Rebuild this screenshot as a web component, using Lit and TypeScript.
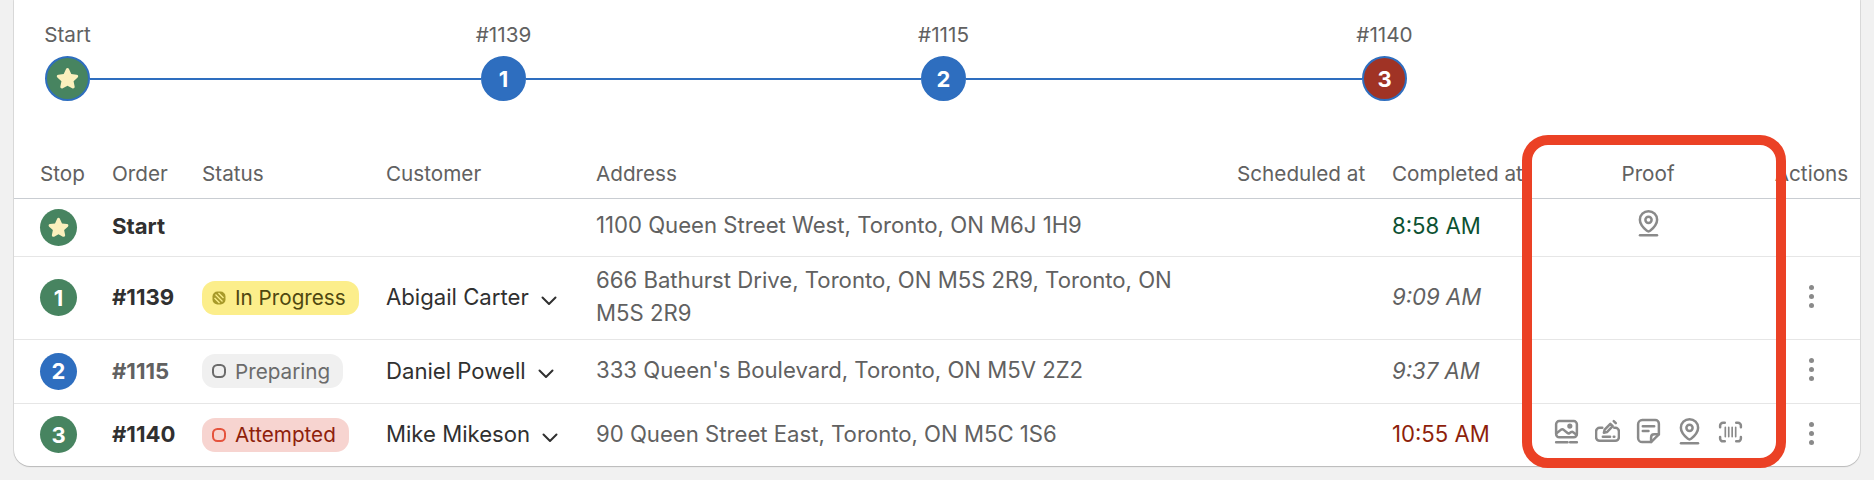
import { LitElement, html, css, svg, nothing, type TemplateResult } from "lit";
import { customElement } from "lit/decorators.js";

type Tone = "progress" | "preparing" | "attempted";

interface Row {
  stop: string;
  stopColor: "green" | "blue";
  order: string;
  muted?: boolean;
  status?: { label: string; tone: Tone };
  customer?: string;
  address: string;
  time: string;
  timeClass: string;
  proof: TemplateResult[];
  actions: boolean;
}

const star = (size: number) => html`<svg width=${size} height=${size} viewBox="0 0 20 20">
  <path
    d="M10 2.2c.5 0 .9.3 1.1.8l1.7 3.7 4 .5c1.1.1 1.5 1.4.7 2.1l-3 2.7.8 4c.2 1-.9 1.8-1.8 1.3L10 15.3l-3.5 2c-.9.5-2-.3-1.8-1.3l.8-4-3-2.7c-.8-.7-.4-2 .7-2.1l4-.5L8.9 3c.2-.5.6-.8 1.1-.8z"
    fill="#fbf0bd"
  />
</svg>`;

const icon = (body: unknown) => html`<svg class="proof-icon" width="25" height="27" viewBox="0 0 24 26">${body}</svg>`;

const pin = () =>
  icon(svg`<path d="M12 1.200c-4.600 0-8.300 3.600-8.300 8.100 0 4.600 3.600 8 6.600 10.600.9.800 2.500.800 3.400 0 3-2.600 6.600-6 6.600-10.600 0-4.500-3.700-8.100-8.300-8.100z"/>
    <circle cx="12" cy="9.500" r="3"/>
    <path d="M3.800 24.200h16.400"/>`);

const photo = () =>
  icon(svg`<rect x="2" y="3" width="20" height="15.500" rx="3"/>
    <circle cx="15.200" cy="7.800" r="1.300"/>
    <path d="M2.400 14.600l4.400-3.400c.7-.5 1.500-.5 2.200 0l4 3.200c.6.5 1.300.5 2 .1l1.400-.9c.7-.4 1.400-.4 2 .1l3.200 2.400"/>
    <path d="M2 23.400h11M15.500 23.400H22"/>`);

const signature = () =>
  icon(svg`<path d="M7 9.500H4.500c-1.900 0-3.500 1.500-3.500 3.400v5.700c0 1.900 1.600 3.400 3.500 3.400h15c1.900 0 3.500-1.500 3.500-3.400v-5.700c0-1.900-1.600-3.400-3.500-3.400h-1"/>
    <path d="M8.500 14.200l.8-3 5.400-5.600 2.300 2.300-5.500 5.600z"/>
    <path d="M18 3l2 2M7.500 18h7M18 18h.6"/>`);

const note = () =>
  icon(svg`<path d="M14.500 23.200H6c-2.200 0-4-1.800-4-4V6c0-2.200 1.800-4 4-4h12.500c2 0 3.500 1.500 3.500 3.500v10.200z"/>
    <path d="M14.500 23.200v-4.500c0-1.700 1.300-3 3-3H22"/>
    <path d="M6.500 8h11M6.500 12.500h5.500"/>`);

const barcode = () =>
  icon(svg`<path d="M6.500 4.500H4.800C3.300 4.500 2 5.800 2 7.300v1.500M17.500 4.500h1.700C20.700 4.500 22 5.800 22 7.300v1.500M6.500 22.500H4.800C3.300 22.500 2 21.200 2 19.700v-1.500M17.500 22.500h1.700c1.500 0 2.800-1.300 2.800-2.800v-1.500"/>
    <path class="bars" d="M7 9v9M10.300 9v9M13.600 9v9M17 9v9"/>`);

const ROWS: Row[] = [
  {
    stop: "star",
    stopColor: "green",
    order: "Start",
    address: "1100 Queen Street West, Toronto, ON M6J 1H9",
    time: "8:58 AM",
    timeClass: "time-ok",
    proof: [pin()],
    actions: false,
  },
  {
    stop: "1",
    stopColor: "green",
    order: "#1139",
    status: { label: "In Progress", tone: "progress" },
    customer: "Abigail Carter",
    address: "666 Bathurst Drive, Toronto, ON M5S 2R9, Toronto, ON M5S 2R9",
    time: "9:09 AM",
    timeClass: "time-eta",
    proof: [],
    actions: true,
  },
  {
    stop: "2",
    stopColor: "blue",
    order: "#1115",
    muted: true,
    status: { label: "Preparing", tone: "preparing" },
    customer: "Daniel Powell",
    address: "333 Queen's Boulevard, Toronto, ON M5V 2Z2",
    time: "9:37 AM",
    timeClass: "time-eta",
    proof: [],
    actions: true,
  },
  {
    stop: "3",
    stopColor: "green",
    order: "#1140",
    status: { label: "Attempted", tone: "attempted" },
    customer: "Mike Mikeson",
    address: "90 Queen Street East, Toronto, ON M5C 1S6",
    time: "10:55 AM",
    timeClass: "time-late",
    proof: [photo(), signature(), note(), pin(), barcode()],
    actions: true,
  },
];

@customElement("app-root")
export class AppRoot extends LitElement {
  private renderStatusIcon(tone: Tone) {
    if (tone === "progress") {
      return html`<svg width="14" height="16" viewBox="0 0 14 16">
        <rect x="0.5" y="1.500" width="13" height="13" rx="5" fill="#a89a2a" />
        <path d="M3.500 4.500l7 7M6.500 3l5 5M2.500 8l5 5" stroke="#fcee8b" stroke-width="1.300" />
      </svg>`;
    }
    const color = tone === "preparing" ? "#6b6b6b" : "#e5533d";
    return html`<svg width="14" height="16" viewBox="0 0 14 16">
      <rect x="1" y="2" width="12" height="12" rx="4.500" fill="none" stroke=${color} stroke-width="2" />
    </svg>`;
  }

  private renderRow(row: Row) {
    return html`<tr>
      <td class="stop-cell">
        <span class="stop-dot ${row.stopColor}">${row.stop === "star" ? star(25) : row.stop}</span>
      </td>
      <td class="order text ${row.muted ? "muted" : ""}">${row.order}</td>
      <td>
        ${row.status
          ? html`<span class="pill ${row.status.tone}">${this.renderStatusIcon(row.status.tone)}${row.status.label}</span>`
          : nothing}
      </td>
      <td class="text">
        ${row.customer
          ? html`<span class="customer">
              ${row.customer}
              <svg width="18" height="12" viewBox="0 0 18 12">
                <path d="M2.500 2.500l6.500 6.500 6.500-6.500" fill="none" stroke="#303030" stroke-width="2" stroke-linecap="round" stroke-linejoin="round" />
              </svg>
            </span>`
          : nothing}
      </td>
      <td class="address text">${row.address}</td>
      <td></td>
      <td class="text ${row.timeClass}">${row.time}</td>
      <td class="proof"><div class="proof-list">${row.proof}</div></td>
      <td class="actions">
        ${row.actions ? html`<span class="dots"><i></i><i></i><i></i></span>` : nothing}
      </td>
    </tr>`;
  }

  render() {
    return html`
      <div class="card">
        <div class="route">
          <div class="route-stop">
            <span class="route-label">Start</span>
            <span class="route-dot green">${star(27)}</span>
          </div>
          <span class="route-line" style="width: 391px"></span>
          <div class="route-stop">
            <span class="route-label">#1139</span>
            <span class="route-dot blue plain">1</span>
          </div>
          <span class="route-line" style="width: 395px"></span>
          <div class="route-stop">
            <span class="route-label">#1115</span>
            <span class="route-dot blue plain">2</span>
          </div>
          <span class="route-line" style="width: 396px"></span>
          <div class="route-stop">
            <span class="route-label">#1140</span>
            <span class="route-dot red">3</span>
          </div>
        </div>
        <table>
          <colgroup>
            <col style="width: 98px" />
            <col style="width: 90px" />
            <col style="width: 184px" />
            <col style="width: 210px" />
            <col style="width: 641px" />
            <col style="width: 155px" />
            <col style="width: 135px" />
            <col style="width: 242px" />
            <col style="width: 91px" />
          </colgroup>
          <thead>
            <tr>
              <th class="stop-cell">Stop</th>
              <th>Order</th>
              <th>Status</th>
              <th>Customer</th>
              <th>Address</th>
              <th>Scheduled at</th>
              <th>Completed at</th>
              <th class="proof">Proof</th>
              <th class="actions">Actions</th>
            </tr>
          </thead>
          <tbody>
            ${ROWS.map((row) => this.renderRow(row))}
          </tbody>
        </table>
      </div>
      <div class="highlight"></div>
    `;
  }

  static styles = css`
    :host {
      display: block;
      position: relative;
      height: 480px;
      background: #f1f1f1;
      font-family: Inter, "Liberation Sans", sans-serif;
      font-size: 22.15px;
      color: #303030;
      overflow: hidden;
    }

    .card {
      margin-left: 14px;
      width: 1846px;
      height: 466px;
      box-sizing: border-box;
      background: #fff;
      border-radius: 0 0 16px 16px;
      box-shadow: 0 1px 1px #b8b8b8, 1px 0 0 #dcdcdc, -1px 0 0 #dcdcdc;
      overflow: hidden;
    }

    .route {
      display: flex;
      align-items: flex-end;
      height: 101px;
      padding-left: 31px;
      box-sizing: border-box;
    }

    .route-stop {
      display: flex;
      flex-direction: column;
      align-items: center;
      width: 45px;
    }

    .route-label {
      color: #616161;
      font-size: 20.7px;
      white-space: nowrap;
      line-height: 22px;
      margin-bottom: 10px;
    }

    .route-dot {
      width: 45px;
      height: 45px;
      box-sizing: border-box;
      border-radius: 50%;
      border: 2px solid #2e6ebf;
      display: flex;
      align-items: center;
      justify-content: center;
      color: #fff;
      font-weight: 700;
      font-size: 22px;
    }

    .route-line {
      flex: none;
      height: 2px;
      margin-bottom: 21px;
      background: #2e6ebf;
    }

    .green {
      background: #478460;
    }

    .blue {
      background: #2e6ebf;
    }

    .red {
      background: #a03325;
    }

    table {
      width: 1846px;
      table-layout: fixed;
      border-collapse: collapse;
      margin-top: 49px;
    }

    th {
      height: 48px;
      padding: 0 0 1px;
      box-sizing: border-box;
      text-align: left;
      font-size: 20.7px;
      font-weight: 400;
      color: #616161;
      white-space: nowrap;
      border-bottom: 1px solid #c9cdd2;
    }

    td {
      padding: 0;
      vertical-align: middle;
      color: #616161;
      border-bottom: 1px solid #e6e6e6;
    }

    td.text {
      padding-bottom: 1px;
    }

    tbody tr:first-child td.text {
      padding-bottom: 3px;
    }

    tbody tr:nth-child(1) {
      height: 58px;
    }

    tbody tr:nth-child(2) {
      height: 83px;
    }

    tbody tr:nth-child(3) {
      height: 64px;
    }

    tbody tr:nth-child(4) {
      height: 63px;
    }

    tbody tr:last-child td {
      border-bottom: none;
    }

    .stop-cell {
      padding-left: 26px;
    }

    .stop-dot {
      width: 37px;
      height: 37px;
      border-radius: 50%;
      display: flex;
      align-items: center;
      justify-content: center;
      color: #fff;
      font-weight: 700;
      font-size: 22px;
    }

    .order {
      font-weight: 650;
      color: #303030;
    }

    .order.muted {
      color: #616161;
    }

    .pill {
      display: inline-flex;
      align-items: center;
      gap: 9px;
      height: 34px;
      padding: 0 13px 0 10px;
      box-sizing: border-box;
      border-radius: 13px;
      font-size: 20.7px;
      white-space: nowrap;
    }

    .pill.progress {
      background: #fcee8b;
      color: #4f4710;
    }

    .pill.preparing {
      background: #f0f0f0;
      color: #6b6b6b;
    }

    .pill.attempted {
      background: #f7d4d0;
      color: #8e1f0b;
    }

    .customer {
      display: inline-flex;
      align-items: center;
      gap: 11px;
      color: #303030;
      white-space: nowrap;
    }

    .customer svg {
      margin-top: 7px;
    }

    .address {
      padding-right: 45px;
      line-height: 33px;
    }

    .time-ok {
      color: #0c5132;
    }

    .time-eta {
      font-style: italic;
    }

    .time-late {
      color: #8e1f0b;
    }

    th.proof {
      text-align: center;
    }

    .proof-list {
      display: flex;
      justify-content: center;
      gap: 16px;
      margin-bottom: 6px;
    }

    tbody tr:first-child .proof-list {
      margin-bottom: 8px;
    }

    .proof-icon {
      fill: none;
      stroke: #8a8a8a;
      stroke-width: 2.4;
      stroke-linecap: round;
      stroke-linejoin: round;
    }

    .proof-icon .bars {
      stroke-width: 1.6;
    }

    .actions {
      padding: 0 7px 0 0;
      text-align: center;
    }

    th.actions {
      padding-right: 6px;
    }

    .dots {
      display: inline-flex;
      flex-direction: column;
      gap: 4px;
      vertical-align: middle;
      margin-bottom: 4px;
    }

    .dots i {
      width: 5px;
      height: 5px;
      border-radius: 50%;
      background: #8a8a8a;
    }

    .highlight {
      position: absolute;
      left: 1522px;
      top: 135px;
      width: 264px;
      height: 333px;
      box-sizing: border-box;
      border: 10px solid #eb4125;
      border-radius: 26px;
      pointer-events: none;
    }
  `;
}

declare global {
  interface HTMLElementTagNameMap {
    "app-root": AppRoot;
  }
}
